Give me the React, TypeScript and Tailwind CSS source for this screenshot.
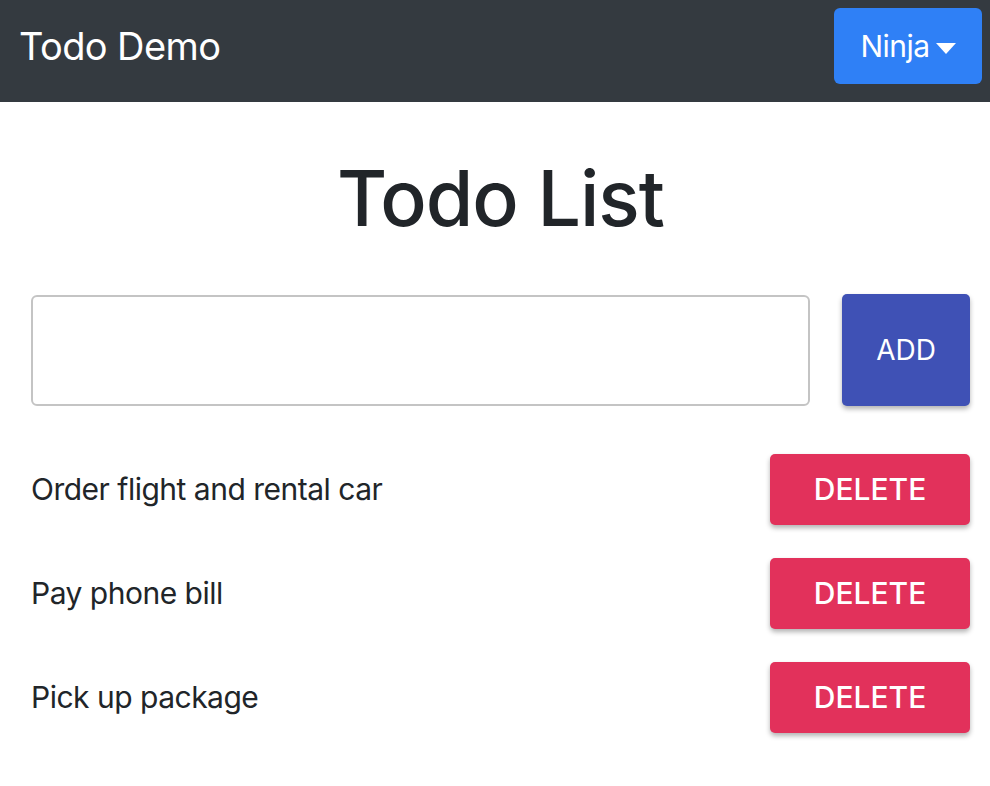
import { useState } from "react";

const initialTodos = [
  { id: 1, text: "Order flight and rental car" },
  { id: 2, text: "Pay phone bill" },
  { id: 3, text: "Pick up package" },
];

const App = () => {
  const [todos, setTodos] = useState(initialTodos);
  const [value, setValue] = useState("");

  const addTodo = () => {
    if (!value.trim()) return;
    setTodos([...todos, { id: Date.now(), text: value }]);
    setValue("");
  };

  return (
    <div className="min-h-screen bg-white font-['Inter',sans-serif] text-[#212529]">
      <nav className="flex h-[102px] items-center justify-between bg-[#343a40] pb-[10px] pl-[19px] pr-2">
        <span className="text-[38px] tracking-[-0.6px] text-white">Todo Demo</span>
        <button className="flex h-[76px] w-[148px] items-center justify-center gap-1.5 rounded-[6px] bg-[#2f80f6] text-[30px] tracking-[-0.5px] text-white">
          Ninja
          <span className="mt-1 h-0 w-0 border-x-[10px] border-t-[11px] border-x-transparent border-t-white" />
        </button>
      </nav>

      <div className="px-[31px] pr-5">
        <h1 className="mt-[58px] text-center text-[77px] font-[450] leading-none tracking-[-1px]">Todo List</h1>

        <div className="mt-[57px] flex items-center gap-8">
          <input
            value={value}
            onChange={(e) => setValue(e.target.value)}
            className="h-[111px] flex-1 rounded-[6px] border-2 border-[#c4c4c4] px-4 text-[28px] outline-none"
          />
          <button
            onClick={addTodo}
            className="h-[112px] w-[128px] rounded-[5px] bg-[#3f51b5] text-[28px] text-white shadow-[0_3px_5px_rgba(0,0,0,0.3)]"
          >
            ADD
          </button>
        </div>

        <ul className="mt-12 flex flex-col gap-[33px]">
          {todos.map((todo) => (
            <li key={todo.id} className="flex items-center justify-between">
              <span className="text-[30px] tracking-[-0.5px]">{todo.text}</span>
              <button
                onClick={() => setTodos(todos.filter((t) => t.id !== todo.id))}
                className="h-[71px] w-[200px] rounded-[5px] bg-[#e2315b] text-[30px] font-medium text-white shadow-[0_3px_5px_rgba(0,0,0,0.3)]"
              >
                DELETE
              </button>
            </li>
          ))}
        </ul>
      </div>
    </div>
  );
};

export default App;
